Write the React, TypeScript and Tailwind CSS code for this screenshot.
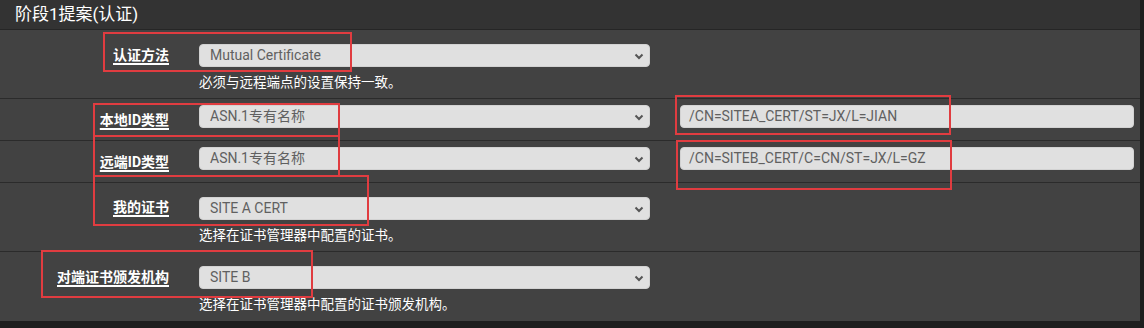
import { ReactNode } from "react";

const font = { fontFamily: 'Roboto, "Noto Sans CJK SC", sans-serif' };

const Chevron = () => (
  <svg width="10" height="7" viewBox="0 0 10 7" className="absolute right-[5px] top-[8px]">
    <path d="M1.5 1.5 L5 5 L8.5 1.5" fill="none" stroke="#555" strokeWidth="2" />
  </svg>
);

const Select = ({ value }: { value: string }) => (
  <div className="relative w-[451px] h-[23px] rounded-[4px] bg-[#e0e0e0] border border-[#d2d2d2] text-[14px] leading-[21px] text-[#606060] pl-[10px]">
    {value}
    <Chevron />
  </div>
);

const Label = ({ children, offset = "" }: { children: ReactNode; offset?: string }) => (
  <div className={`w-[169px] h-[23px] flex items-center justify-end shrink-0 ${offset}`}>
    <span className="text-[14px] font-bold text-white underline underline-offset-[3px] decoration-[1.5px]">
      {children}
    </span>
  </div>
);

const Help = ({ children }: { children: ReactNode }) => (
  <div className="text-[13.5px] leading-[20px] text-white mt-[5px]">{children}</div>
);

const Row = ({ children, h, pt }: { children: ReactNode; h: string; pt: string }) => (
  <div className={`flex items-start border-b border-[#2b2b2b] ${h} ${pt}`}>{children}</div>
);

const Box = ({ c }: { c: string }) => (
  <div className={`absolute border-2 border-[#e03c40] ${c}`} />
);

export default function App() {
  return (
    <div className="relative w-[1144px] h-[328px] bg-[#1e1e1e]" style={font}>
      <div className="w-[1140px] h-[321px] bg-[#424242]">
        <div className="h-[30px] bg-[#333333] border-b border-[#262626] pl-[15px] text-[17px] leading-[29px] text-white">
          阶段1提案(认证)
        </div>

        <Row h="h-[69px]" pt="pt-[14px]">
          <Label>认证方法</Label>
          <div className="ml-[30px]">
            <Select value="Mutual Certificate" />
            <Help>必须与远程端点的设置保持一致。</Help>
          </div>
        </Row>

        <Row h="h-[42px]" pt="pt-[6px]">
          <Label offset="mt-[4px]">本地ID类型</Label>
          <div className="ml-[30px]">
            <Select value="ASN.1专有名称" />
          </div>
          <div className="ml-[30px] w-[454px] h-[23px] rounded-[4px] bg-[#e0e0e0] border border-[#d2d2d2] text-[14px] leading-[21px] text-[#606060] pl-[8px]">
            /CN=SITEA_CERT/ST=JX/L=JIAN
          </div>
        </Row>

        <Row h="h-[42px]" pt="pt-[6px]">
          <Label offset="mt-[4px]">远端ID类型</Label>
          <div className="ml-[30px]">
            <Select value="ASN.1专有名称" />
          </div>
          <div className="ml-[30px] w-[454px] h-[23px] rounded-[4px] bg-[#e0e0e0] border border-[#d2d2d2] text-[14px] leading-[21px] text-[#606060] pl-[8px]">
            /CN=SITEB_CERT/C=CN/ST=JX/L=GZ
          </div>
        </Row>

        <Row h="h-[69px]" pt="pt-[14px]">
          <Label offset="-mt-[1px]">我的证书</Label>
          <div className="ml-[30px]">
            <Select value="SITE A CERT" />
            <Help>选择在证书管理器中配置的证书。</Help>
          </div>
        </Row>

        <Row h="h-[69px] border-b-0" pt="pt-[14px]">
          <Label>对端证书颁发机构</Label>
          <div className="ml-[30px]">
            <Select value="SITE B" />
            <Help>选择在证书管理器中配置的证书颁发机构。</Help>
          </div>
        </Row>
      </div>

      <Box c="left-[103px] top-[32px] w-[249px] h-[40px]" />
      <Box c="left-[93px] top-[103px] w-[247px] h-[34px]" />
      <Box c="left-[93px] top-[135px] w-[247px] h-[42px]" />
      <Box c="left-[93px] top-[175px] w-[276px] h-[51px]" />
      <Box c="left-[41px] top-[250px] w-[272px] h-[48px]" />
      <Box c="left-[675px] top-[95px] w-[276px] h-[40px]" />
      <Box c="left-[676px] top-[140px] w-[276px] h-[50px]" />
    </div>
  );
}
